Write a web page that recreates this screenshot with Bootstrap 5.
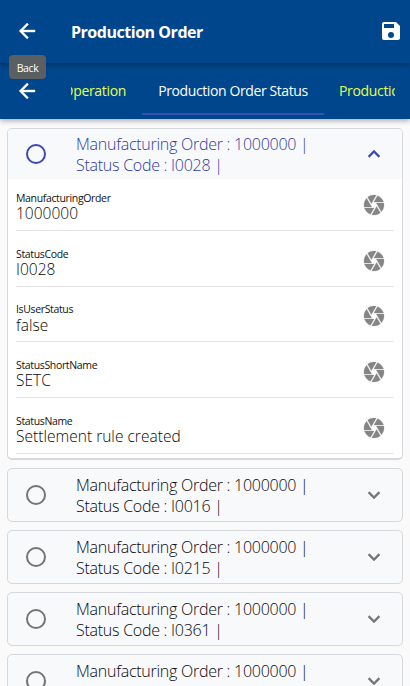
<!DOCTYPE html>
<html lang="en">
<head>
<meta charset="utf-8">
<meta name="viewport" content="width=device-width, initial-scale=1">
<title>Production Order</title>
<link href="https://cdn.jsdelivr.net/npm/bootstrap@5.3.0/dist/css/bootstrap.min.css" rel="stylesheet">
<style>
body{font-family:"Open Sans","Noto Sans",sans-serif;background:#fafafa;height:686px;overflow:hidden}
svg{display:block;flex:none;fill:currentColor}
.topbar,.tabstrip{background:#00468c;padding-left:15px}
.topbar{height:63px;padding-right:7px;box-shadow:0 2px 4px rgba(0,0,0,.32);z-index:2}
.tabstrip{height:56px;box-shadow:0 2px 5px rgba(0,0,0,.3)}
.title-text{font-size:16px;font-weight:700;letter-spacing:-.47px;line-height:24px;margin-left:32px;margin-top:1px}
.topbar svg{margin-bottom:2px}
.tabs-view{margin-left:32px;width:324px;height:56px}
.tab-item{font-size:14px;line-height:56px;letter-spacing:-.33px;white-space:nowrap;flex:none;color:#e4ff50;height:56px}
.tab-first{width:71px;padding-right:16px}
.tab-active{color:#fff;width:182px;box-shadow:inset 0 -4px #00468c,inset 0 -6px #3452b5;letter-spacing:-.4px}
.tab-next{padding-left:15px}
.tip{left:9px;top:55px;width:37px;height:24px;background:#5c5f62;font-size:10.5px;line-height:27px;z-index:3;letter-spacing:-.4px}
.orders{padding:9px 7px 0;gap:8px}
.order-card{border:1px solid #d5d8dc;border-radius:5px;flex:none;background:#f8f9fb}
.order-card.open{height:332px;background:#fff;border-bottom-width:2px}
.order-head{height:52px;padding:0 16px;color:#08090c}
.open .order-head{height:50px;color:#2f3aa0;background:#f8f9fb;border-radius:4px 4px 0 0}
.order-name{font-size:16px;line-height:21px;letter-spacing:-.26px;font-weight:300;margin-left:28px;padding-top:2px;width:250px;white-space:nowrap}
.order-name.partial{height:44px}
.gray-ico{color:#757575}
.open .order-head .gray-ico{color:#3f48b0}
.field-row{height:55.7px;margin:0 8px;border-bottom:1px solid #e4e4e4;padding:15.5px 8px 0 0}
.field-row:nth-of-type(2){height:52px;padding-top:11.5px}
.field-name{font-size:10.5px;line-height:14.5px;letter-spacing:-.35px;color:#111}
.field-val{font-size:15.5px;line-height:16.5px;letter-spacing:.02px;font-weight:300;color:#080808}
.iris{color:#858585;margin-top:2.1px}
</style>
<script src="https://cdn.jsdelivr.net/npm/bootstrap@5.3.0/dist/js/bootstrap.bundle.min.js"></script>
</head>
<body>
<svg width="0" height="0" class="position-absolute">
<symbol id="back" viewBox="0 0 24 24"><path stroke="currentColor" stroke-width=".4" d="M20,11V13H8L13.5,18.5L12.08,19.92L4.16,12L12.08,4.08L13.5,5.5L8,11H20Z"/></symbol>
<symbol id="save" viewBox="0 0 24 24"><path fill-rule="evenodd" d="M17 3H5C3.89 3 3 3.9 3 5V19C3 20.1 3.89 21 5 21H19C20.1 21 21 20.1 21 19V7L17 3ZM12 19A3 3 0 1 1 12 13A3 3 0 0 1 12 19ZM15 9H5V5H15V9Z"/></symbol>
<symbol id="ring" viewBox="0 0 24 24"><circle cx="12" cy="12" r="9" fill="none" stroke="currentColor" stroke-width="2"/></symbol>
<symbol id="down" viewBox="0 0 24 24"><path stroke="currentColor" stroke-width=".4" d="M7.41,8.58L12,13.17L16.59,8.58L18,10L12,16L6,10Z"/></symbol>
<symbol id="up" viewBox="0 0 24 24"><path stroke="currentColor" stroke-width=".4" d="M7.41,15.41L12,10.83L16.59,15.41L18,14L12,8L6,14Z"/></symbol>
<symbol id="iris" viewBox="0 0 24 24"><path stroke="currentColor" stroke-width=".25" d="M13.73,15L9.83,21.76C10.53,21.91 11.25,22 12,22C14.4,22 16.6,21.15 18.32,19.75L14.66,13.4ZM2.46,15C3.38,17.92 5.61,20.26 8.45,21.34L12.12,15ZM8.54,12L4.64,5.25C3,7 2,9.39 2,12C2,12.68 2.07,13.35 2.2,14H9.69ZM21.8,10H14.31L14.6,10.5L19.36,18.75C21,16.97 22,14.6 22,12C22,11.31 21.93,10.64 21.8,10ZM21.54,9C20.62,6.07 18.39,3.74 15.55,2.66L11.88,9ZM9.4,10.5L14.17,2.24C13.47,2.09 12.75,2 12,2C9.6,2 7.4,2.84 5.68,4.25L9.34,10.6L9.4,10.5Z"/></symbol>
</svg>
<header class="topbar d-flex align-items-center text-white position-relative">
<svg width="24" height="24"><use href="#back"/></svg>
<h1 class="title-text mb-0">Production Order</h1>
<svg class="ms-auto" width="24" height="24"><use href="#save"/></svg>
<div class="tip position-absolute rounded-1 text-center">Back</div>
</header>
<nav class="tabstrip d-flex align-items-center text-white">
<svg width="24" height="24"><use href="#back"/></svg>
<div class="tabs-view d-flex overflow-hidden">
<div class="tab-item tab-first d-flex justify-content-end">Operation</div>
<div class="tab-item tab-active text-center">Production Order Status</div>
<div class="tab-item tab-next">Production Order</div>
</div>
</nav>
<main class="orders d-flex flex-column">
<section class="order-card open">
<div class="order-head d-flex align-items-center"><svg class="gray-ico" width="24" height="24"><use href="#ring"/></svg><div class="order-name">Manufacturing Order : 1000000 |<br>Status Code : I0028 |</div><svg class="gray-ico ms-auto" width="24" height="24"><use href="#up"/></svg></div>
<div class="field-row d-flex justify-content-between"><div><div class="field-name">ManufacturingOrder</div><div class="field-val">1000000</div></div><svg class="iris" width="24" height="24"><use href="#iris"/></svg></div>
<div class="field-row d-flex justify-content-between"><div><div class="field-name">StatusCode</div><div class="field-val">I0028</div></div><svg class="iris" width="24" height="24"><use href="#iris"/></svg></div>
<div class="field-row d-flex justify-content-between"><div><div class="field-name">IsUserStatus</div><div class="field-val">false</div></div><svg class="iris" width="24" height="24"><use href="#iris"/></svg></div>
<div class="field-row d-flex justify-content-between"><div><div class="field-name">StatusShortName</div><div class="field-val">SETC</div></div><svg class="iris" width="24" height="24"><use href="#iris"/></svg></div>
<div class="field-row d-flex justify-content-between"><div><div class="field-name">StatusName</div><div class="field-val">Settlement rule created</div></div><svg class="iris" width="24" height="24"><use href="#iris"/></svg></div>
</section>
<section class="order-card"><div class="order-head d-flex align-items-center"><svg class="gray-ico" width="24" height="24"><use href="#ring"/></svg><div class="order-name">Manufacturing Order : 1000000 |<br>Status Code : I0016 |</div><svg class="gray-ico ms-auto" width="24" height="24"><use href="#down"/></svg></div></section>
<section class="order-card"><div class="order-head d-flex align-items-center"><svg class="gray-ico" width="24" height="24"><use href="#ring"/></svg><div class="order-name">Manufacturing Order : 1000000 |<br>Status Code : I0215 |</div><svg class="gray-ico ms-auto" width="24" height="24"><use href="#down"/></svg></div></section>
<section class="order-card"><div class="order-head d-flex align-items-center"><svg class="gray-ico" width="24" height="24"><use href="#ring"/></svg><div class="order-name">Manufacturing Order : 1000000 |<br>Status Code : I0361 |</div><svg class="gray-ico ms-auto" width="24" height="24"><use href="#down"/></svg></div></section>
<section class="order-card"><div class="order-head d-flex align-items-center"><svg class="gray-ico" width="24" height="24"><use href="#ring"/></svg><div class="order-name partial">Manufacturing Order : 1000000 |</div><svg class="gray-ico ms-auto" width="24" height="24"><use href="#down"/></svg></div></section>
</main>
</body>
</html>
